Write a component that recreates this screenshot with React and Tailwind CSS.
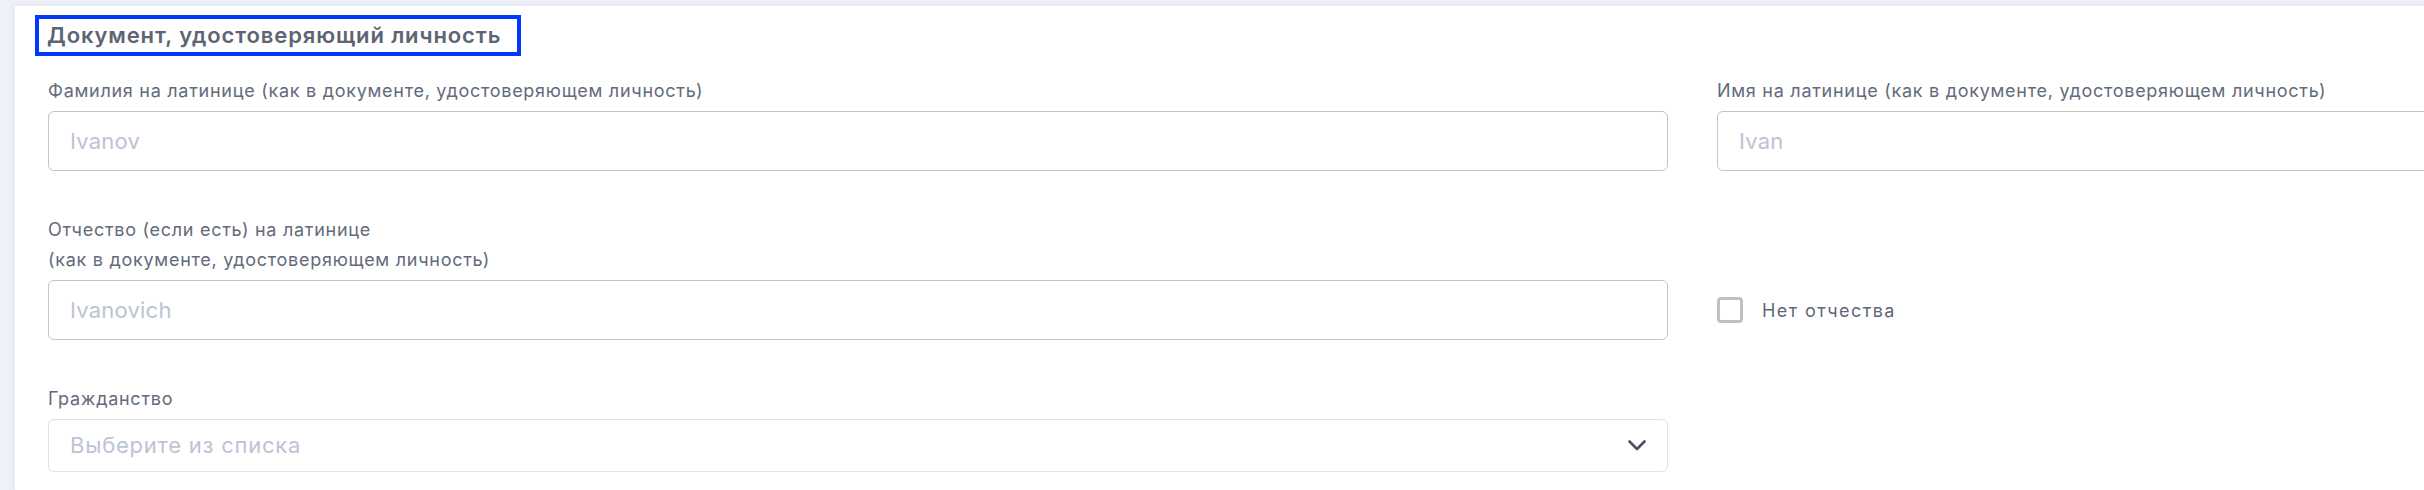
const Chevron = () => (
  <svg width="18" height="11" viewBox="0 0 18 11" fill="none">
    <path d="M1.5 1.5 L9 9 L16.5 1.5" stroke="#4a5061" strokeWidth="2.6" strokeLinecap="round" strokeLinejoin="round" />
  </svg>
);

function Field({ label, placeholder }) {
  return (
    <div className="flex flex-col">
      <label className="text-[18px] leading-[30px] tracking-[0.04em] text-[#636b7b] mb-[5px]">{label}</label>
      <div className="h-[60px] border border-[#c4c4c4] rounded-[6px] flex items-center px-[21px]">
        <span className="text-[22px] tracking-[0.01em] text-[#bcc3d3]">{placeholder}</span>
      </div>
    </div>
  );
}

export default function App() {
  return (
    <div className="w-full h-[490px] bg-[#eef1f8] pt-[6px] pl-[15px] overflow-hidden font-['Inter',sans-serif]">
      <div className="h-full bg-white shadow-[0_0_8px_rgba(30,40,80,0.08)] pt-[9px] overflow-hidden">
        <div className="ml-[20px] inline-block border-4 border-[#0038ff] pl-[8px] pr-[16px]">
          <h2 className="text-[22px] leading-[33px] tracking-[0.04em] font-semibold text-[#5d6575]">Документ, удостоверяющий личность</h2>
        </div>

        <div className="ml-[33px] mt-[20px] grid grid-cols-[1620px_1620px] gap-x-[49px] gap-y-[44px] w-max">
          <Field label="Фамилия на латинице (как в документе, удостоверяющем личность)" placeholder="Ivanov" />
          <Field label="Имя на латинице (как в документе, удостоверяющем личность)" placeholder="Ivan" />

          <Field
            label={
              <>
                Отчество (если есть) на латинице
                <br />
                (как в документе, удостоверяющем личность)
              </>
            }
            placeholder="Ivanovich"
          />
          <div className="flex flex-col justify-end">
            <label className="h-[60px] flex items-center gap-[19px]">
              <span className="w-[26px] h-[26px] border-[3px] border-[#c0c0c0] rounded-[4px]" />
              <span className="text-[18px] tracking-[0.08em] text-[#5f6778]">Нет отчества</span>
            </label>
          </div>

          <div className="flex flex-col">
            <label className="text-[18px] leading-[30px] tracking-[0.04em] text-[#636b7b] mb-[5px]">Гражданство</label>
            <div className="h-[53px] border border-[#dfe2ea] rounded-[6px] flex items-center justify-between pl-[21px] pr-[21px]">
              <span className="text-[22px] tracking-[0.035em] text-[#bcc3d3]">Выберите из списка</span>
              <Chevron />
            </div>
          </div>
          <div />
        </div>
      </div>
    </div>
  );
}
